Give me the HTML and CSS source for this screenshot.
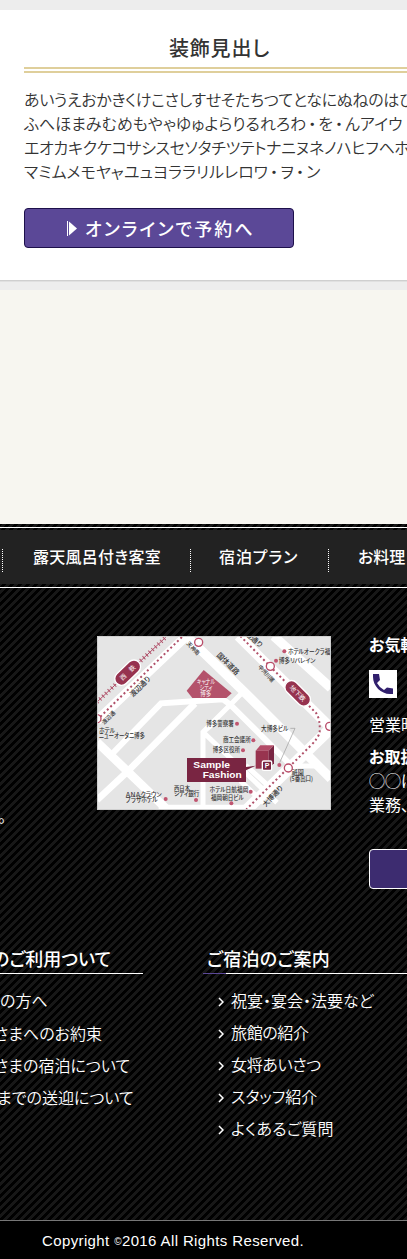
FILE: index.html
```html
<!DOCTYPE html>
<html lang="ja">
<head>
<meta charset="utf-8">
<title>Sample Fashion</title>
<link rel="stylesheet" href="styles.css">
</head>
<body>
<main class="main">
  <section class="card">
    <h2 class="card-title"><span>装飾見出し</span></h2>
    <div class="card-text">
      <p class="l1">あいうえおかきくけこさしすせそたちつてとなにぬねのはひ</p>
      <p class="l2">ふへほまみむめもやゃゆゅよらりるれろわ<i>・</i>を<i>・</i>んアイウ</p>
      <p class="l3">エオカキクケコサシスセソタチツテトナニヌネノハヒフヘホ</p>
      <p class="l4">マミムメモヤャユュヨララリルレロワ<i>・</i>ヲ<i>・</i>ン</p>
    </div>
    <a class="reserve"><svg width="10" height="15" viewBox="0 0 10 15"><path d="M.5 0v15" stroke="#fff"/><path d="M2 .5v14L10 7.5z" fill="#fff"/></svg><span>オンラインで予約へ</span></a>
  </section>
</main>
<footer class="footer">
  <nav class="nav">
    <ul class="nav-list">
      <li class="n1"><span>露天風呂付き客室</span></li>
      <li class="n2"><span>宿泊プラン</span></li>
      <li class="n3"><span>お料理</span></li>
    </ul>
  </nav>
  <div class="info">
    <p class="info-left">。</p>
    <svg class="map" viewBox="0 0 702 522">
      <rect width="702" height="522" fill="#e5e5e5"/>
      <g fill="none" stroke="#fff" stroke-width="24">
        <path d="M0 254L268 0M268 0L440 166L702 428" stroke-width="28"/>
        <path d="M0 318L212 522" stroke-width="26"/>
        <path d="M424 0L702 276" stroke-width="30"/>
        <path d="M530 0L702 156" stroke-width="28"/>
        <path d="M702 276L448 522" stroke-width="34"/>
        <path d="M45 354L192 202L378 190L400 206L574 380" stroke-width="18"/>
        <path d="M0 492L90 408L294 202" stroke-width="20"/>
        <path d="M440 166L400 206L318 288V512M318 288L350 262M318 288L540 500M185 514H465M574 390H666M446 388L530 464M430 435L500 500" stroke-width="15"/>
      </g>
      <g fill="none" stroke="#b05069">
        <path d="M0 198L206 4" stroke-width="3"/>
        <path d="M0 198L206 4" stroke-width="13" stroke-dasharray="3 9"/>
        <path d="M0 252L258 0M430 0L658 232Q670 250 668 288Q665 305 640 330L448 520" stroke-width="6" stroke-dasharray="6 8"/>
      </g>
      <g fill="#fff" stroke="#b94c69" stroke-width="4">
        <circle cx="305" cy="19" r="12"/><circle cx="520" cy="91" r="12"/><circle cx="574" cy="396" r="12"/><circle cx="698" cy="271" r="12"/><circle cx="0" cy="248" r="12"/>
      </g>
      <path d="M320 102L404 172L388 186H286L269 164z" fill="#b4526b"/>
      <g fill="#96324f" stroke="#fff" stroke-width="4">
        <rect x="-46" y="-20" width="92" height="40" rx="20" transform="translate(92 110) rotate(-44)"/>
        <rect x="-46" y="-20" width="92" height="40" rx="20" transform="translate(602 172) rotate(45)"/>
      </g>
      <g class="map-light" font-size="19">
        <text x="-28" y="7" textLength="56" lengthAdjust="spacingAndGlyphs" transform="translate(92 110) rotate(-44)">西　鉄</text>
        <text x="-30" y="7" textLength="60" lengthAdjust="spacingAndGlyphs" transform="translate(602 172) rotate(45)">地下鉄</text>
        <text x="300" y="143" textLength="54" lengthAdjust="spacingAndGlyphs">キャナル</text>
        <text x="308" y="161" textLength="38" lengthAdjust="spacingAndGlyphs">シティ</text>
        <text x="310" y="179" textLength="32" lengthAdjust="spacingAndGlyphs">博多</text>
      </g>
      <g class="map-label" font-size="19">
        <text textLength="76" lengthAdjust="spacingAndGlyphs" font-size="22" transform="translate(108 184) rotate(-45)">渡辺通り</text>
        <text textLength="48" lengthAdjust="spacingAndGlyphs" font-size="17" transform="translate(22 266) rotate(-45)">渡辺通</text>
        <text textLength="48" lengthAdjust="spacingAndGlyphs" font-size="17" transform="translate(268 24) rotate(47)">天神南</text>
        <text textLength="84" lengthAdjust="spacingAndGlyphs" font-size="22" transform="translate(358 59) rotate(45)">国体道路</text>
        <text textLength="60" lengthAdjust="spacingAndGlyphs" font-size="21" transform="translate(444 -4) rotate(41)">辺通り</text>
        <text textLength="62" lengthAdjust="spacingAndGlyphs" font-size="17" transform="translate(482 94) rotate(47)">中州川端</text>
        <text textLength="78" lengthAdjust="spacingAndGlyphs" font-size="21" transform="translate(506 514) rotate(-47)">大博通り</text>
        <text x="573" y="53" textLength="127" lengthAdjust="spacingAndGlyphs">ホテルオークラ福</text>
        <text x="545" y="80" textLength="110" lengthAdjust="spacingAndGlyphs">博多リバレイン</text>
        <text x="6" y="291" textLength="48" lengthAdjust="spacingAndGlyphs">ホテル</text>
        <text x="6" y="307" textLength="138" lengthAdjust="spacingAndGlyphs">ニューオータニ博多</text>
        <text x="328" y="269" textLength="82" lengthAdjust="spacingAndGlyphs">博多警察署</text>
        <text x="378" y="319" textLength="83" lengthAdjust="spacingAndGlyphs">商工会議所</text>
        <text x="347" y="349" textLength="82" lengthAdjust="spacingAndGlyphs">博多区役所</text>
        <text x="492" y="284" textLength="82" lengthAdjust="spacingAndGlyphs">大博多ビル</text>
        <text x="86" y="483" textLength="108" lengthAdjust="spacingAndGlyphs">ＡＮＡクラウン</text>
        <text x="86" y="499" textLength="96" lengthAdjust="spacingAndGlyphs">プラザホテル</text>
        <text x="231" y="464" textLength="48" lengthAdjust="spacingAndGlyphs">西日本</text>
        <text x="231" y="479" textLength="76" lengthAdjust="spacingAndGlyphs">シティ銀行</text>
        <text x="338" y="467" textLength="116" lengthAdjust="spacingAndGlyphs">ホテル日航福岡</text>
        <text x="342" y="493" textLength="98" lengthAdjust="spacingAndGlyphs">福岡朝日ビル</text>
        <text x="584" y="417" textLength="36" lengthAdjust="spacingAndGlyphs">祇園</text>
        <text x="578" y="435" textLength="70" lengthAdjust="spacingAndGlyphs">(5番出口)</text>
      </g>
      <path d="M580 277H594L548 380" fill="none" stroke="#999" stroke-width="2"/>
      <g fill="#c05570">
        <circle cx="562" cy="46" r="6"/><circle cx="537" cy="74" r="6"/><circle cx="420" cy="263" r="6"/><circle cx="469" cy="313" r="6"/><circle cx="438" cy="343" r="6"/><circle cx="547" cy="387" r="6"/><circle cx="206" cy="489" r="6"/><circle cx="297" cy="492" r="6"/><circle cx="461" cy="467" r="6"/><circle cx="403" cy="502" r="6"/>
      </g>
      <path d="M476 344L490 328H531L515 344z" fill="#b34c68"/>
      <path d="M476 344H515V398H476z" fill="#98344f"/>
      <path d="M515 344L531 328V382L515 398z" fill="#792542"/>
      <path d="M270 366H447V393L476 389L447 403V438H270z" fill="#792542"/>
      <rect x="496" y="375" width="28" height="28" rx="4" fill="#792542" stroke="#fff" stroke-width="4"/>
      <g class="map-brand">
        <text x="503" y="397" font-size="21">P</text>
        <text x="289" y="397" font-size="28" textLength="110" lengthAdjust="spacingAndGlyphs">Sample</text>
        <text x="317" y="427" font-size="28" textLength="117" lengthAdjust="spacingAndGlyphs">Fashion</text>
      </g>
      <rect x="1" y="1" width="700" height="520" fill="none" stroke="#ccc" stroke-width="3"/>
    </svg>
    <div class="contact">
      <p class="contact-head">お気軽</p>
      <span class="phone"><svg width="20" height="20" viewBox="0 0 20 20"><path d="M0 0H6L7 6L4 9Q6 13 11 16L14 13.500L20 14.500V20H17C8 20 0 12 0 3z" fill="#31206d"/></svg></span>
      <p class="hours">営業時</p>
      <p class="contact-head deal">お取扱</p>
      <p>◯◯に</p>
      <p>業務、</p>
      <div class="contact-button"></div>
    </div>
  </div>
  <div class="links">
    <section class="col-left">
      <h3><span>のご利用ついて</span></h3>
      <ul>
        <li class="a1">の方へ</li>
        <li class="a2">さまへのお約束</li>
        <li class="a3">さまの宿泊について</li>
        <li class="a4">までの送迎について</li>
      </ul>
    </section>
    <section class="col-right">
      <h3><span>ご宿泊のご案内</span></h3>
      <ul>
        <li class="b1"><svg class="chev" viewBox="0 0 6 10"><path d="M1 1L5 5L1 9"/></svg><span>祝宴・宴会・法要など</span></li>
        <li class="b2"><svg class="chev" viewBox="0 0 6 10"><path d="M1 1L5 5L1 9"/></svg><span>旅館の紹介</span></li>
        <li class="b3"><svg class="chev" viewBox="0 0 6 10"><path d="M1 1L5 5L1 9"/></svg><span>女将あいさつ</span></li>
        <li class="b4"><svg class="chev" viewBox="0 0 6 10"><path d="M1 1L5 5L1 9"/></svg><span>スタッフ紹介</span></li>
        <li class="b5"><svg class="chev" viewBox="0 0 6 10"><path d="M1 1L5 5L1 9"/></svg><span>よくあるご質問</span></li>
      </ul>
    </section>
  </div>
  <p class="copyright">Copyright <small>©</small>2016 All Rights Reserved.</p>
</footer>
</body>
</html>
```
FILE: styles.css
```css
* { box-sizing: border-box; margin: 0; padding: 0; }
html, body { overflow: hidden; }
body {
  width: 407px;
  height: 1259px;
  font-family: "Noto Sans CJK JP", sans-serif;
  font-size: 16px;
  line-height: 24px;
  font-feature-settings: "palt";
  color: #333;
  background: #f7f6f0;
  white-space: nowrap;
}
ul { list-style: none; }
.main { height: 524px; }
.card {
  height: 290px;
  padding: 32px 0 0 24px;
  background: linear-gradient(#ededed 10px, #fff 10px 280px, #cfcfcf 280px 281px, #e0e0e0 281px 282px, #ededed 282px);
  font-weight: 350;
}
.card-title {
  height: 41px;
  padding-left: 145px;
  font-size: 20px;
  line-height: 32px;
  font-weight: 500;
  letter-spacing: .8px;
  background: linear-gradient(#dfcf9b 2px, transparent 2px 4px, #dfcf9b 4px) 0 35px / 100% 6px no-repeat;
}
.card-text { padding-top: 14px; }
.card-text i { padding: 0 2px; font-style: normal; }
.l1, .l3 { letter-spacing: -.3px; }
.reserve {
  display: flex;
  align-items: center;
  width: 270px;
  height: 40px;
  margin-top: 25px;
  padding-left: 42px;
  gap: 8px;
  border: 1px solid #1d104b;
  border-radius: 4px;
  background: #5b4897;
  color: #fff;
  font-size: 18px;
  font-weight: 500;
  letter-spacing: 2.1px;
}
.footer {
  height: 735px;
  color: #fff;
  background: linear-gradient(135deg, #000 12.5%, #171717 12.5% 37.5%, #000 37.5% 62.5%, #171717 62.5% 87.5%, #000 87.5%) 0 0 / 8px 8px;
}
.nav {
  height: 64px;
  padding: 3px 0 0;
  border-bottom: 1px solid #fff;
}
.nav-list {
  display: flex;
  align-items: flex-start;
  height: 60px;
  padding-top: 21px;
  background: linear-gradient(#222, #222) 0 2px / 100% 54px no-repeat;
  border-top: 1px solid #fff;
}
.nav-list li { height: 23px; border-left: 1px dotted #fff; font-weight: 500; line-height: 14px; }
.n1 { width: 188px; margin-left: 2px; padding-left: 30px; letter-spacing: .25px; }
.n2 { width: 138px; padding-left: 28px; letter-spacing: .9px; }
.n3 { padding-left: 29px; }
.info { display: flex; height: 352px; padding-top: 48px; }
.info-left { width: 97px; padding-top: 167px; text-indent: -2px; }
.map { width: 234px; height: 174px; margin-right: 38px; flex: none; }
.map text { font-feature-settings: "palt"; }
.map-label { fill: #333; font-weight: 500; }
.map-light { fill: #fff; }
.map-brand { fill: #fff; font-family: "Liberation Sans", sans-serif; font-weight: 700; }
.contact { width: 38px; overflow: hidden; margin-top: -4px; }
.contact-head { font-weight: 700; }
.phone { display: grid; place-items: center; width: 28px; height: 28px; margin-top: 14px; background: #fff; }
.hours { margin-top: 14px; }
.deal { margin-top: 8px; }
.contact-button { width: 180px; height: 40px; margin-top: 33px; border: 1px solid #fff; border-radius: 4px; background: #3d2c70; }
.links { display: flex; height: 280px; padding-top: 5px; }
.col-left { width: 143px; margin-right: 60px; }
.col-right { width: 204px; }
.links h3 {
  height: 29px;
  font-size: 18px;
  font-weight: 500;
  line-height: 26px;
  border-bottom: 1px solid #fff;
}
.col-left h3 { text-indent: -8px; }
.col-right h3 { padding-left: 4px; letter-spacing: .3px; border-image: linear-gradient(90deg, #5b4897 24px, #fff 24px) 1; }
.links ul { padding-top: 14px; }
.links li { height: 32px; font-weight: 350; }
.col-left .a1 { height: 33px; }
.col-left .a2, .col-left .a3 { text-indent: -6px; }
.col-left .a4 { text-indent: -3px; }
.col-right li { display: flex; align-items: center; height: 24px; margin-bottom: 8px; padding-left: 15px; gap: 7px; }
.col-right li span { margin-top: -1px; }
.b2, .b3 { letter-spacing: -.35px; }
.b5 { letter-spacing: .25px; }
.chev { width: 6px; height: 10px; margin-top: 4px; fill: none; stroke: #fff; stroke-width: 1.5; }
.copyright {
  height: 39px;
  padding-left: 42px;
  border-top: 1px solid #777;
  background: #000;
  font-family: "Liberation Sans", sans-serif;
  font-size: 15px;
  line-height: 39px;
  letter-spacing: .38px;
}
.copyright small { font-size: 10px; vertical-align: 1px; }
```
